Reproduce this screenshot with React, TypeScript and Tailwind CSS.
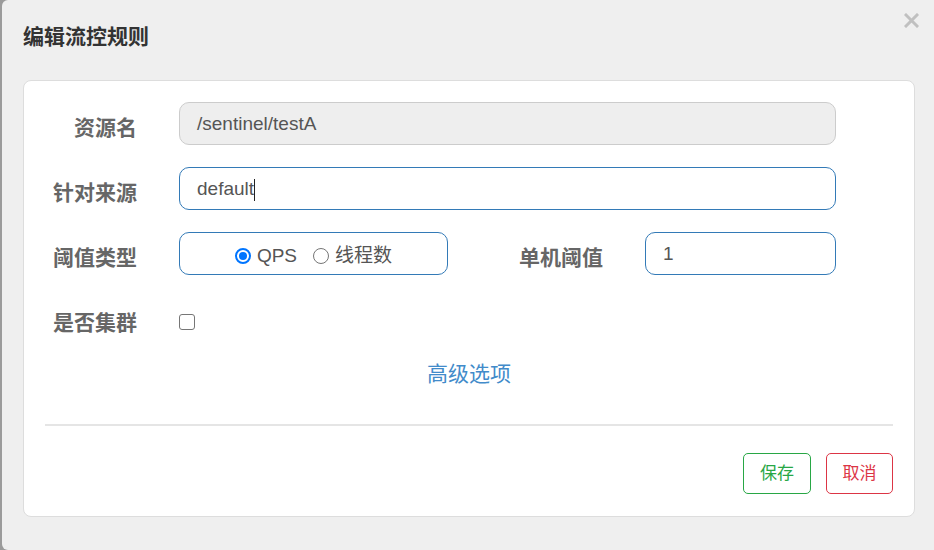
import React from 'react';

const font = { fontFamily: '"Liberation Sans", "Noto Sans CJK SC", sans-serif' };

const Label = ({ text, width }: { text: string; width: string }) => (
  <div className={`${width} shrink-0 text-right text-[21px] font-bold text-[#666] leading-[28px] pt-[8px]`}>{text}</div>
);

const Radio = ({ checked }: { checked: boolean }) =>
  checked ? (
    <span className="inline-flex shrink-0 w-[16px] h-[16px] rounded-full border-[2px] border-[#0075ff] items-center justify-center bg-white">
      <span className="block w-[8px] h-[8px] rounded-full bg-[#0075ff]" />
    </span>
  ) : (
    <span className="inline-block shrink-0 w-[16px] h-[16px] rounded-full border-[1.5px] border-[#767676] bg-white" />
  );

export default function App() {
  return (
    <div className="w-[934px] h-[550px] bg-[#9b9b9b] overflow-hidden" style={font}>
      <div className="ml-[2px] h-[550px] bg-[#efefef] rounded-l-[6px] relative pl-[21px] pr-[19px] pt-[22px]">
        <h4 className="text-[21px] font-bold text-[#333] leading-[30px] h-[30px]">编辑流控规则</h4>
        <button className="absolute top-[13px] right-[15px] w-[15px] h-[15px]">
          <svg viewBox="0 0 15 15" width="15" height="15">
            <path d="M2 2 L13 13 M13 2 L2 13" stroke="#c0c0c0" strokeWidth="3" strokeLinecap="square" />
          </svg>
        </button>

        <div className="mt-[28px] bg-white border border-[#ddd] rounded-[8px] px-[21px] pt-[21px] pb-[22px]">
          <div className="flex flex-col gap-[22px]">
            {/* 资源名 */}
            <div className="flex items-center h-[43px]">
              <Label text="资源名" width="w-[92px]" />
              <div className="ml-[42px] w-[657px] h-[43px] rounded-[10px] border border-[#ccc] bg-[#eee] px-[17px] pt-[2px] flex items-center text-[19px] text-[#555]">
                /sentinel/testA
              </div>
            </div>

            {/* 针对来源 */}
            <div className="flex items-center h-[43px]">
              <Label text="针对来源" width="w-[92px]" />
              <div className="ml-[42px] w-[657px] h-[43px] rounded-[10px] border border-[#337ab7] px-[17px] pt-[2px] flex items-center text-[19px] text-[#555]">
                default
                <span className="w-[1px] h-[22px] bg-[#222]" />
              </div>
            </div>

            {/* 阈值类型 / 单机阈值 */}
            <div className="flex items-center h-[43px]">
              <Label text="阈值类型" width="w-[92px]" />
              <div className="ml-[42px] w-[269px] h-[43px] rounded-[10px] border border-[#337ab7] pt-[5px] flex items-center justify-center text-[19px] text-[#555]">
                <Radio checked />
                <span className="ml-[6px]">QPS</span>
                <span className="ml-[16px] flex"><Radio checked={false} /></span>
                <span className="ml-[6px]">线程数</span>
              </div>
              <Label text="单机阈值" width="w-[155px]" />
              <div className="ml-[42px] w-[191px] h-[43px] rounded-[10px] border border-[#337ab7] px-[17px] pt-[2px] flex items-center text-[19px] text-[#555]">
                1
              </div>
            </div>

            {/* 是否集群 */}
            <div className="flex items-center h-[43px]">
              <Label text="是否集群" width="w-[92px]" />
              <span className="ml-[42px] mt-[6px] w-[16px] h-[16px] rounded-[3px] border-[1.5px] border-[#767676] bg-white" />
            </div>
          </div>

          <div className="mt-[20px] text-center text-[21px] leading-[28px] text-[#428bca]">高级选项</div>

          <div className="mt-[36px] h-[2px] bg-[#e5e5e5]" />

          <div className="mt-[27px] flex justify-end gap-[15px]">
            <button className="w-[68px] h-[41px] rounded-[5px] border border-[#28a745] text-[#28a745] text-[17px]">保存</button>
            <button className="w-[67px] h-[41px] rounded-[5px] border border-[#dc3545] text-[#dc3545] text-[17px]">取消</button>
          </div>
        </div>
      </div>
    </div>
  );
}
